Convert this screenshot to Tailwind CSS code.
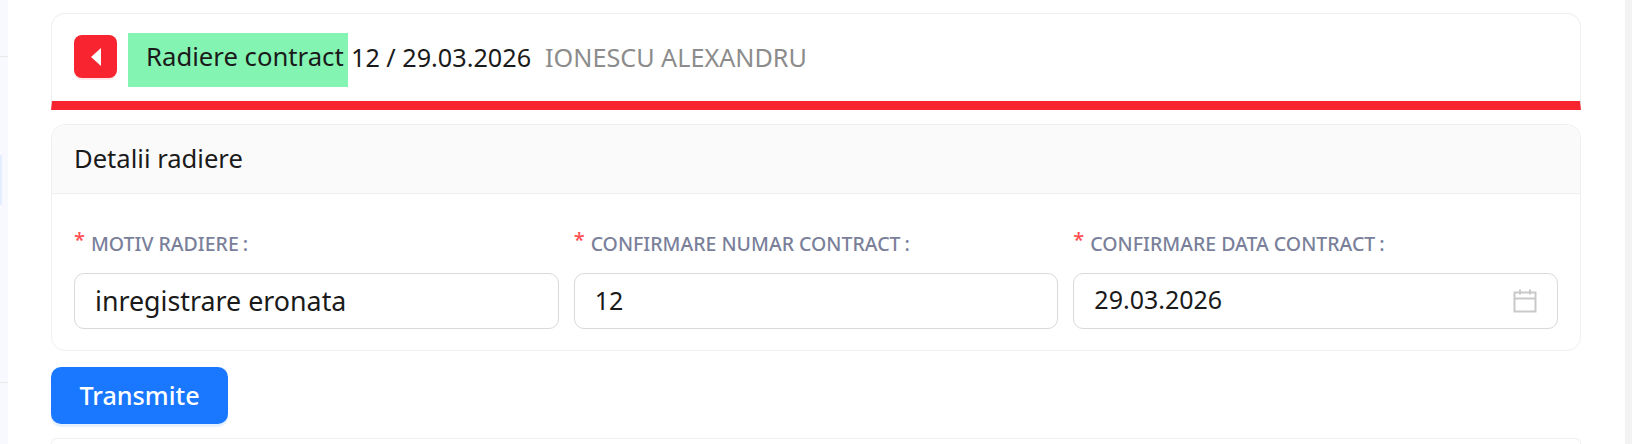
<!DOCTYPE html>
<html lang="en">

<head>
  <meta charset="UTF-8">
  <title>Radiere contract</title>
  <script src="https://cdn.jsdelivr.net/npm/@tailwindcss/browser@4"></script>
</head>

<body class="h-[444px] overflow-hidden bg-white font-['Noto_Sans',sans-serif] text-[#1a1a1a]">
  <div class="flex h-full">
    <!-- sidebar edge -->
    <div class="relative h-full w-[8px] shrink-0 bg-[#f7f9fe]">
      <div class="absolute top-[56px] h-px w-full bg-[#e8e8e8]"></div>
      <div class="absolute top-[382px] h-px w-full bg-[#e8e8e8]"></div>
      <div class="absolute top-[155px] h-[50px] w-[2px] bg-[#e3effe]"></div>
    </div>

    <main class="flex h-full min-w-0 flex-1 flex-col pt-[13px] pl-[43px] pr-[44px]">
      <!-- title -->
      <div class="flex h-[97px] shrink-0 items-start gap-[11px] rounded-t-[14px] border-x border-t border-[#efefef] border-b-[9px] border-b-[#f82430] pl-[22px] pt-[19px]">
        <button class="mt-[2px] flex h-[43px] w-[43px] items-center justify-center rounded-[8px] bg-[#f82430] shadow-[0_2px_0_#ffe9ea]">
          <svg width="12" height="18" viewBox="0 0 12 18"><path d="M11 0 L1 9 L11 18 Z" fill="#fff" /></svg>
        </button>
        <div class="flex items-start leading-[48px]">
          <span class="h-[54px] w-[220px] whitespace-nowrap bg-[#84f4b2] pl-[18px] text-[25.7px]">Radiere contract</span>
          <span class="ml-[3px] text-[25.2px]">12 / 29.03.2026</span>
          <span class="ml-[14px] text-[25.2px] text-[#8c8c8c]">IONESCU ALEXANDRU</span>
        </div>
      </div>

      <!-- details -->
      <section class="mt-[14px] h-[227px] shrink-0 rounded-[14px] border border-[#efefef]">
        <div class="flex h-[69px] items-center rounded-t-[14px] border-b border-[#efefef] bg-[#fafafa] px-[22px] text-[25.6px] font-[450]">Detalii radiere</div>
        <div class="grid grid-cols-3 gap-[15px] px-[22px] pt-[34px]">
          <div>
            <label class="flex h-[45px] items-start text-[19.5px] font-medium uppercase leading-[32px] text-[#7a7f9a]"><span class="mr-[6px] text-[20px] leading-[24px] text-[#ff4d4f]">*</span>Motiv radiere<span class="ml-[4px]">:</span></label>
            <input class="h-[56px] w-full rounded-[10px] border border-[#d9d9d9] bg-white px-[20px] pb-[2px] text-[26.8px] text-[#1a1a1a]" value="inregistrare eronata">
          </div>
          <div>
            <label class="flex h-[45px] items-start text-[19.5px] font-medium uppercase leading-[32px] text-[#7a7f9a]"><span class="mr-[6px] text-[20px] leading-[24px] text-[#ff4d4f]">*</span>Confirmare numar contract<span class="ml-[4px]">:</span></label>
            <input class="h-[56px] w-full rounded-[10px] border border-[#d9d9d9] bg-white px-[20px] pb-[2px] text-[25px] text-[#1a1a1a]" value="12">
          </div>
          <div>
            <label class="flex h-[45px] items-start text-[19.5px] font-medium uppercase leading-[32px] text-[#7a7f9a]"><span class="mr-[6px] text-[20px] leading-[24px] text-[#ff4d4f]">*</span>Confirmare data contract<span class="ml-[4px]">:</span></label>
            <div class="flex h-[56px] items-center justify-between rounded-[10px] border border-[#d9d9d9] bg-white pl-[20px] pr-[20px]">
              <input class="min-w-0 flex-1 pb-[2px] text-[25px] text-[#1a1a1a]" value="29.03.2026">
              <svg width="24" height="24" viewBox="0 0 24 24" fill="none" stroke="#c9c9c9" stroke-width="2"><rect x="1.5" y="3.5" width="21" height="19" /><path d="M1.5 9.5h21M7 0.5v5M17 0.5v5" /></svg>
            </div>
          </div>
        </div>
      </section>

      <button class="mt-[16px] h-[57px] w-[177px] shrink-0 rounded-[10px] bg-[#1a77ff] text-[25.2px] font-medium text-white shadow-[0_3px_0_#e6f1ff]">Transmite</button>

      <div class="mt-[14px] min-h-0 flex-1 rounded-t-[14px] border-x border-t border-[#efefef]"></div>
    </main>

    <div class="h-full w-[7px] shrink-0 bg-[#f3f3f3]"></div>
  </div>
</body>

</html>
